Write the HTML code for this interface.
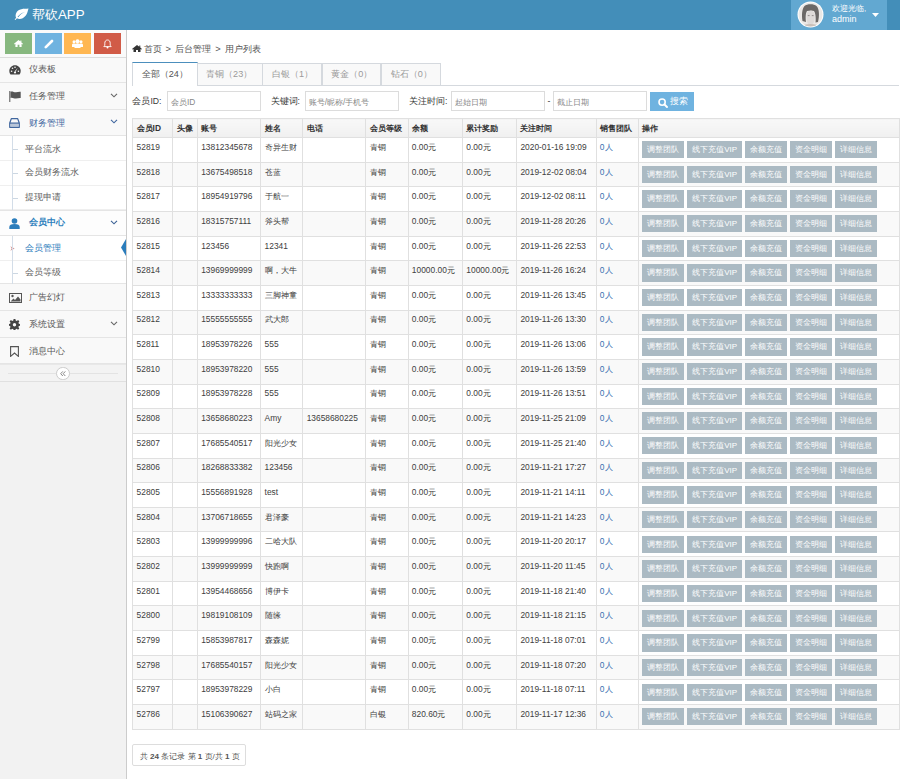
<!DOCTYPE html>
<html><head><meta charset="utf-8">
<style>
*{box-sizing:border-box;margin:0;padding:0}
html,body{width:900px;height:779px;overflow:hidden;background:#fff}
body{font-family:"Liberation Sans",sans-serif;font-size:8.67px;color:#404040;position:relative}
.abs{position:absolute}
#hdr{left:0;top:0;width:900px;height:30px;background:#438EB9}
#brand{left:32px;top:7px;color:#fff;font-size:13.3px;line-height:16px;white-space:nowrap}
#user{left:791px;top:0;width:96px;height:29.5px;background:#62A8D1}
#avatar{left:797px;top:1px;width:27px;height:27px;border-radius:50%;border:1.5px solid #fff;background:radial-gradient(circle at 50% 55%,#d8d4cc 0,#bfb9b0 35%,#8a847c 60%,#cfcac4 100%)}
#uinfo{left:832px;top:3px;color:#fff;font-size:8.67px;line-height:11px;white-space:nowrap}
#side{left:0;top:30px;width:127px;height:749px;background:#f2f2f2;border-right:1px solid #ccc}
#short{left:0;top:30px;width:126px;height:28px;background:#fafafa;border-bottom:1px solid #ddd}
.sb{position:absolute;top:3px;width:27px;height:21px}
.nav{left:0;width:126px;background:#f9f9f9;border-bottom:1px solid #e5e5e5;color:#585858;font-size:8.67px}
.nav .t{position:absolute;left:29px;top:0;white-space:nowrap}
.nav svg.i{position:absolute}
.nav .ch{position:absolute;left:110px;width:8px;height:5px}
.nav.open{color:#2B7DBC}
.sub{left:0;width:126px;background:#fff;border-bottom:1px solid #efefef;color:#616161;font-size:8.67px}
.sub .t{position:absolute;left:25px;white-space:nowrap}
.sub .tick{position:absolute;left:13px;width:5px;height:1px;background:#ccd7e2}
.vline{position:absolute;left:12px;width:1px;background:#d3dde8;z-index:3}
#main{left:127px;top:30px;width:773px;height:749px;background:#fff}
#bc{left:132px;top:43px;color:#555;font-size:9.3px;white-space:nowrap;line-height:12px;word-spacing:1.5px}
.tab{position:absolute;top:63px;height:22.3px;border:1px solid #d5d9de;border-bottom:none;background:#f9f9f9;color:#999;font-size:9.1px;white-space:nowrap;line-height:21.2px;padding-left:8.5px}
.tab.act{top:61.6px;height:24px;line-height:23.5px;border-top:1.7px solid #4C8FBD;background:#fff;color:#555;z-index:2}
#tabline{left:132px;top:85px;width:767px;height:1px;background:#d5d9de}
.lbl{position:absolute;top:95px;color:#393939;font-size:8.67px;white-space:nowrap;line-height:12px}
.inp{position:absolute;top:91.3px;height:19.7px;border:1px solid #dcdcdc;background:#fff;color:#888;font-size:8.4px;line-height:17.5px;padding-left:3px;padding-top:1.5px;white-space:nowrap}
#sbtn{left:650px;top:92px;width:43.7px;height:19px;background:#6FB3E0;color:#fff;font-size:8.67px;line-height:19px;white-space:nowrap}
table{position:absolute;left:132.3px;top:118.3px;width:767.2px;border-collapse:collapse;table-layout:fixed}
td,th{border:1px solid #e0e0e0;text-align:left;vertical-align:top;padding:2.9px 0 0 3.3px;white-space:nowrap;overflow:visible;font-size:8.4px;line-height:13px}
th{height:18.7px;padding-top:2.5px;background:linear-gradient(#f8f8f8,#f0f0f0);color:#333;font-weight:bold}
td{height:24.67px}
tr.e td{background:#f9f9f9}
td.lk{color:#3b6fb0}
td.op{padding:3.1px 0 0 3.3px;line-height:0;font-size:0}
td.op b{display:inline-block;height:17.3px;background:#ABBAC3;color:#fff;font-weight:normal;font-size:8px;line-height:17.3px;margin-right:2.67px;text-align:center;vertical-align:top}
td.op b:nth-child(1){width:42.6px}
td.op b:nth-child(2){width:55px}
td.op b:nth-child(3){width:42.3px}
td.op b:nth-child(4){width:42.3px}
td.op b:nth-child(5){width:42.3px}
#pg{left:132.3px;top:744px;width:113.4px;height:22px;border:1px solid #ddd;border-radius:2px;color:#555;font-size:8.1px;line-height:23px;padding-left:6.5px;white-space:nowrap}
</style></head><body>
<div id="hdr" class="abs"></div>
<svg class="abs" style="left:14px;top:8px" width="15" height="12" viewBox="0 0 15 12"><path d="M14.5 0.5C10 1 4 0 2 5.5C1.2 7.8 1.8 9.3 2.2 9.8L0.6 11.4L1.4 11.9L3 10.3C5 11.6 9 11.3 11.8 7.5C13.3 5.5 13.8 3 14.5 0.5Z M3.6 8.8C5.8 6.2 8.5 4.6 11.2 3.8C8.3 5 6 6.8 4.3 9.3Z" fill="#fff" fill-rule="evenodd"/></svg>
<div id="brand" class="abs">帮砍APP</div>
<div id="user" class="abs"></div>
<svg class="abs" style="left:796.5px;top:1px" width="27" height="27" viewBox="0 0 27 27"><defs><clipPath id="cc"><circle cx="13.5" cy="13.5" r="12"/></clipPath></defs><circle cx="13.5" cy="13.5" r="13" fill="#fff"/><g clip-path="url(#cc)"><rect width="27" height="27" fill="#eae8e6"/><path d="M5.5 20C4.5 14 5 8 7.5 5C10 2.5 17 2.5 19.5 5C22.5 8 22.5 15 21 21L18.5 21.5C19 17 18.5 12 17 10C15 9 12 9.5 10 10C8.5 12 8.5 17 9 21Z" fill="#6b6866"/><path d="M9.5 13C10 10.5 12 9.8 13.8 9.8C16 9.8 17.5 11 17.8 13.5C18 17 17.5 21 15.5 23.5C14 24.5 12.5 24.5 11.2 23.3C9.8 21 9.2 17 9.5 13Z" fill="#dedad8"/><path d="M10.8 14.6H12.6M14.8 14.6H16.6" stroke="#8a8582" stroke-width="0.9"/><path d="M3 27C5 24 8 23 13.5 23S22 24 24 27Z" fill="#c9bfb8"/></g></svg>
<div id="uinfo" class="abs"><span style="font-size:8px">欢迎光临,</span><br><span style="font-size:9px">admin</span></div>
<svg class="abs" style="left:872px;top:13px" width="7" height="4" viewBox="0 0 7 4"><path d="M0 0H7L3.5 4Z" fill="#fff"/></svg>

<div id="side" class="abs"></div>
<div id="short" class="abs">
<div class="sb" style="left:5px;background:#87B87F"><svg style="position:absolute;left:9px;top:7px" width="9" height="7" viewBox="0 0 9 7"><path d="M4.5 0L0 3.8L0.6 4.4L1.4 3.7V7H3.6V4.8H5.4V7H7.6V3.7L8.4 4.4L9 3.8L7.4 2.4V0.5H6.4V1.6Z" fill="#fff"/></svg></div>
<div class="sb" style="left:35px;background:#6FB3E0"><svg style="position:absolute;left:9px;top:5.5px" width="10" height="10" viewBox="0 0 10 10"><path d="M1.8 8.2L8 2" stroke="#fff" stroke-width="2.6" stroke-linecap="round"/><path d="M1 9.2L1.6 7.4L2.6 8.4Z" fill="#fff"/></svg></div>
<div class="sb" style="left:64px;background:#FFB752"><svg style="position:absolute;left:8px;top:6px" width="11" height="9" viewBox="0 0 11 9"><circle cx="5.5" cy="2.2" r="2" fill="#fff"/><circle cx="2" cy="2.8" r="1.5" fill="#fff"/><circle cx="9" cy="2.8" r="1.5" fill="#fff"/><path d="M2.5 9V6.5C2.5 5 4 4.3 5.5 4.3S8.5 5 8.5 6.5V9Z" fill="#fff"/><path d="M0 8V6C0 5 0.8 4.6 2 4.6S3.5 5 3.5 6V8Z M7.5 8V6C7.5 5 8 4.6 9 4.6S11 5 11 6V8Z" fill="#fff"/></svg></div>
<div class="sb" style="left:94px;background:#D15B47"><svg style="position:absolute;left:9px;top:5.5px" width="9" height="10" viewBox="0 0 9 10"><path d="M4.5 1C2.6 1 1.8 2.5 1.8 4.2V6.3L0.8 7.6H8.2L7.2 6.3V4.2C7.2 2.5 6.4 1 4.5 1Z" fill="none" stroke="#fff" stroke-width="0.9"/><circle cx="4.5" cy="8.6" r="1" fill="#fff"/></svg></div>
</div>

<!-- nav -->
<div class="nav abs" style="top:58px;height:25px"><svg class="i" style="left:9px;top:7px" width="12" height="10" viewBox="0 0 12 10"><path d="M6 0.3C2.8 0.3 0.3 2.8 0.3 6C0.3 7.3 0.7 8.6 1.5 9.6H10.5C11.3 8.6 11.7 7.3 11.7 6C11.7 2.8 9.2 0.3 6 0.3Z" fill="#444"/><circle cx="2.6" cy="6.3" r="0.8" fill="#f9f9f9"/><circle cx="3.5" cy="3.3" r="0.8" fill="#f9f9f9"/><circle cx="6" cy="2.2" r="0.8" fill="#f9f9f9"/><circle cx="9.4" cy="6.3" r="0.8" fill="#f9f9f9"/><path d="M8.6 2.8L6.6 6.8L5.6 6.4Z" fill="#f9f9f9"/><circle cx="6" cy="7.5" r="1.1" fill="#f9f9f9"/></svg><span class="t" style="top:6px">仪表板</span></div>
<div class="nav abs" style="top:83px;height:26.5px"><svg class="i" style="left:9px;top:8px" width="12" height="11" viewBox="0 0 12 11"><rect x="0.3" y="0" width="1" height="11" fill="#555"/><path d="M1.5 0.8C3.5 0 5 1.5 7 1.3C8.5 1.2 10 0.5 11.7 0.8V7C10 6.8 8.5 7.5 7 7.6C5 7.7 3.5 6.3 1.5 7Z" fill="#555"/></svg><span class="t" style="top:8px">任务管理</span><svg class="ch" style="top:9.8px" viewBox="0 0 8 5"><path d="M1 0.8L4 3.8L7 0.8" fill="none" stroke="#666" stroke-width="1.15"/></svg></div>
<div class="nav abs" style="top:109.5px;height:26.5px;color:#41679f"><svg class="i" style="left:9px;top:8.8px" width="11" height="10" viewBox="0 0 11 10"><path d="M2.3 0.7H8.7L10.3 5V9.3H0.7V5Z M0.7 5.2H10.3" fill="none" stroke="#41679f" stroke-width="1.2" stroke-linejoin="round"/><rect x="1.6" y="6" width="7.8" height="2.6" fill="#41679f" opacity="0.35"/></svg><span class="t" style="top:8px">财务管理</span><svg class="ch" style="top:9.8px" viewBox="0 0 8 5"><path d="M1 0.8L4 3.8L7 0.8" fill="none" stroke="#41679f" stroke-width="1.15"/></svg></div>
<div class="vline" style="top:136px;height:74px"></div>
<div class="sub abs" style="top:136px;height:25px"><span class="tick" style="top:13px"></span><span class="t" style="top:7.5px">平台流水</span></div>
<div class="sub abs" style="top:161px;height:24.5px"><span class="tick" style="top:12px"></span><span class="t" style="top:6px">会员财务流水</span></div>
<div class="sub abs" style="top:185.5px;height:24px"><span class="tick" style="top:12px"></span><span class="t" style="top:6px">提现申请</span></div>
<div class="nav open abs" style="top:209.5px;height:26.5px;border-top:1px solid #e5e5e5;background:#fdfdfd"><svg class="i" style="left:9px;top:7px" width="11" height="11" viewBox="0 0 11 11"><circle cx="5.5" cy="3" r="2.8" fill="#2B7DBC"/><path d="M0.3 11V9C0.3 7 2 6 5.5 6S10.7 7 10.7 9V11Z" fill="#2B7DBC"/></svg><span class="t" style="top:6.5px;font-weight:bold">会员中心</span><svg class="ch" style="top:9.8px" viewBox="0 0 8 5"><path d="M1 0.8L4 3.8L7 0.8" fill="none" stroke="#3d6396" stroke-width="1.15"/></svg></div>
<div class="vline" style="top:236px;height:48px"></div>
<div class="sub abs" style="top:236px;height:24.5px;color:#2B7DBC"><svg style="position:absolute;left:10px;top:9.6px" width="5" height="5" viewBox="0 0 5 5"><path d="M0.3 0.2L4.7 2.5L0.3 4.8L1.6 2.5Z" fill="#d49a9a"/></svg><span class="t" style="top:7.3px">会员管理</span><svg style="position:absolute;left:121px;top:2.8px" width="5" height="17" viewBox="0 0 5 17"><path d="M5 0V17L0 8.5Z" fill="#2B7DBC"/></svg></div>
<div class="sub abs" style="top:260.5px;height:23.5px;border-bottom:1px solid #e5e5e5"><span class="tick" style="top:12px"></span><span class="t" style="top:6px">会员等级</span></div>
<div class="nav abs" style="top:284px;height:27px"><svg class="i" style="left:8.5px;top:8.5px" width="13" height="10" viewBox="0 0 13 10"><rect x="0.5" y="0.5" width="12" height="9" fill="none" stroke="#555" stroke-width="1"/><circle cx="3.5" cy="3" r="1.2" fill="#555"/><path d="M1.5 8.5L4.5 5.5L6 7L9 3.5L11.5 6.5V8.5Z" fill="#555"/></svg><span class="t" style="top:8px">广告幻灯</span></div>
<div class="nav abs" style="top:311px;height:26.5px"><svg class="i" style="left:9px;top:8px" width="11" height="11" viewBox="0 0 11 11"><path d="M4.6 0H6.4L6.7 1.6L7.8 2.1L9.1 1.1L10.4 2.4L9.4 3.7L9.9 4.8L11 5V6.8L9.9 7L9.4 8.1L10.3 9.4L9 10.7L7.7 9.8L6.6 10.3L6.4 11H4.6L4.3 10.3L3.2 9.8L1.9 10.7L0.6 9.4L1.5 8.1L1.1 7L0 6.8V5L1.1 4.8L1.6 3.7L0.6 2.4L1.9 1.1L3.2 2.1L4.3 1.6Z" fill="#444"/><circle cx="5.5" cy="5.7" r="1.7" fill="#f9f9f9"/></svg><span class="t" style="top:8px">系统设置</span><svg class="ch" style="top:9.8px" viewBox="0 0 8 5"><path d="M1 0.8L4 3.8L7 0.8" fill="none" stroke="#666" stroke-width="1.15"/></svg></div>
<div class="nav abs" style="top:337.5px;height:26.5px"><svg class="i" style="left:10px;top:8px" width="9" height="11" viewBox="0 0 9 11"><path d="M0.6 0.6H8.4V10.4L4.5 7L0.6 10.4Z" fill="none" stroke="#555" stroke-width="1.1"/></svg><span class="t" style="top:8px">消息中心</span></div>
<div class="abs" style="left:0;top:364.3px;width:126px;height:18px;background:#f3f3f3;border-top:1px solid #e8e8e8;border-bottom:1px solid #e0e0e0"></div>
<div class="abs" style="left:8px;top:373.2px;width:110px;height:1px;background:#e3e3e3"></div>
<div class="abs" style="left:56.3px;top:366.9px;width:13.6px;height:13.6px;border-radius:50%;border:1.2px solid #ccc;background:#fff;"></div>
<svg class="abs" style="left:60px;top:371px" width="6" height="5.5" viewBox="0 0 6 5.5"><path d="M2.8 0.4L0.7 2.7L2.8 5 M5.3 0.4L3.2 2.7L5.3 5" fill="none" stroke="#888" stroke-width="1"/></svg>

<div id="main" class="abs"></div>
<div id="bc" class="abs"><svg style="position:relative;top:0px;margin-right:1.5px" width="10" height="7" viewBox="0 0 10 7"><path d="M5 0L0 4L0.6 4.6L1.5 3.9V7H4V5H6V7H8.5V3.9L9.4 4.6L10 4L8.3 2.6V0.5H7.3V1.8Z" fill="#333"/></svg>首页 &gt; 后台管理 &gt; 用户列表</div>

<div class="tab act" style="left:132.3px;width:65.5px">全部（24）</div>
<div class="tab" style="left:196.6px;width:66px">青铜（23）</div>
<div class="tab" style="left:262.4px;width:59.6px">白银（1）</div>
<div class="tab" style="left:321.8px;width:59.6px">黄金（0）</div>
<div class="tab" style="left:381.2px;width:60px">钻石（0）</div>
<div id="tabline" class="abs"></div>

<span class="lbl" style="left:132.4px">会员ID:</span>
<div class="inp" style="left:166.9px;width:94.3px">会员ID</div>
<span class="lbl" style="left:270.5px">关键词:</span>
<div class="inp" style="left:304.7px;width:94px">账号/昵称/手机号</div>
<span class="lbl" style="left:409px">关注时间:</span>
<div class="inp" style="left:450.8px;width:94px">起始日期</div>
<span class="lbl" style="left:547.5px">-</span>
<div class="inp" style="left:553px;width:94px">截止日期</div>
<div id="sbtn" class="abs"><svg style="position:absolute;left:8px;top:5.5px" width="10" height="10" viewBox="0 0 10 10"><circle cx="4.1" cy="4.1" r="3.1" fill="none" stroke="#fff" stroke-width="1.6"/><path d="M6.5 6.5L9 9" stroke="#fff" stroke-width="1.9" stroke-linecap="round"/></svg><span style="position:absolute;left:20px;top:0;font-size:9px">搜索</span></div>

<table>
<colgroup><col style="width:40px"><col style="width:24.6px"><col style="width:63.4px"><col style="width:42.1px"><col style="width:63.1px"><col style="width:42.1px"><col style="width:54.5px"><col style="width:54.1px"><col style="width:79.4px"><col style="width:42px"><col style="width:261.9px"></colgroup>
<tr><th>会员ID</th><th>头像</th><th>账号</th><th>姓名</th><th>电话</th><th>会员等级</th><th>余额</th><th>累计奖励</th><th>关注时间</th><th>销售团队</th><th>操作</th></tr>
<tr><td>52819</td><td></td><td>13812345678</td><td>奇异生财</td><td></td><td>青铜</td><td>0.00元</td><td>0.00元</td><td>2020-01-16 19:09</td><td class="lk">0人</td><td class="op"><b>调整团队</b><b>线下充值VIP</b><b>余额充值</b><b>资金明细</b><b>详细信息</b></td></tr>
<tr class="e"><td>52818</td><td></td><td>13675498518</td><td>苍蓝</td><td></td><td>青铜</td><td>0.00元</td><td>0.00元</td><td>2019-12-02 08:04</td><td class="lk">0人</td><td class="op"><b>调整团队</b><b>线下充值VIP</b><b>余额充值</b><b>资金明细</b><b>详细信息</b></td></tr>
<tr><td>52817</td><td></td><td>18954919796</td><td>于航一</td><td></td><td>青铜</td><td>0.00元</td><td>0.00元</td><td>2019-12-02 08:11</td><td class="lk">0人</td><td class="op"><b>调整团队</b><b>线下充值VIP</b><b>余额充值</b><b>资金明细</b><b>详细信息</b></td></tr>
<tr class="e"><td>52816</td><td></td><td>18315757111</td><td>斧头帮</td><td></td><td>青铜</td><td>0.00元</td><td>0.00元</td><td>2019-11-28 20:26</td><td class="lk">0人</td><td class="op"><b>调整团队</b><b>线下充值VIP</b><b>余额充值</b><b>资金明细</b><b>详细信息</b></td></tr>
<tr><td>52815</td><td></td><td>123456</td><td>12341</td><td></td><td>青铜</td><td>0.00元</td><td>0.00元</td><td>2019-11-26 22:53</td><td class="lk">0人</td><td class="op"><b>调整团队</b><b>线下充值VIP</b><b>余额充值</b><b>资金明细</b><b>详细信息</b></td></tr>
<tr class="e"><td>52814</td><td></td><td>13969999999</td><td>啊，大牛</td><td></td><td>青铜</td><td>10000.00元</td><td>10000.00元</td><td>2019-11-26 16:24</td><td class="lk">0人</td><td class="op"><b>调整团队</b><b>线下充值VIP</b><b>余额充值</b><b>资金明细</b><b>详细信息</b></td></tr>
<tr><td>52813</td><td></td><td>13333333333</td><td>三脚神童</td><td></td><td>青铜</td><td>0.00元</td><td>0.00元</td><td>2019-11-26 13:45</td><td class="lk">0人</td><td class="op"><b>调整团队</b><b>线下充值VIP</b><b>余额充值</b><b>资金明细</b><b>详细信息</b></td></tr>
<tr class="e"><td>52812</td><td></td><td>15555555555</td><td>武大郎</td><td></td><td>青铜</td><td>0.00元</td><td>0.00元</td><td>2019-11-26 13:30</td><td class="lk">0人</td><td class="op"><b>调整团队</b><b>线下充值VIP</b><b>余额充值</b><b>资金明细</b><b>详细信息</b></td></tr>
<tr><td>52811</td><td></td><td>18953978226</td><td>555</td><td></td><td>青铜</td><td>0.00元</td><td>0.00元</td><td>2019-11-26 13:06</td><td class="lk">0人</td><td class="op"><b>调整团队</b><b>线下充值VIP</b><b>余额充值</b><b>资金明细</b><b>详细信息</b></td></tr>
<tr class="e"><td>52810</td><td></td><td>18953978220</td><td>555</td><td></td><td>青铜</td><td>0.00元</td><td>0.00元</td><td>2019-11-26 13:59</td><td class="lk">0人</td><td class="op"><b>调整团队</b><b>线下充值VIP</b><b>余额充值</b><b>资金明细</b><b>详细信息</b></td></tr>
<tr><td>52809</td><td></td><td>18953978228</td><td>555</td><td></td><td>青铜</td><td>0.00元</td><td>0.00元</td><td>2019-11-26 13:51</td><td class="lk">0人</td><td class="op"><b>调整团队</b><b>线下充值VIP</b><b>余额充值</b><b>资金明细</b><b>详细信息</b></td></tr>
<tr class="e"><td>52808</td><td></td><td>13658680223</td><td>Amy</td><td>13658680225</td><td>青铜</td><td>0.00元</td><td>0.00元</td><td>2019-11-25 21:09</td><td class="lk">0人</td><td class="op"><b>调整团队</b><b>线下充值VIP</b><b>余额充值</b><b>资金明细</b><b>详细信息</b></td></tr>
<tr><td>52807</td><td></td><td>17685540517</td><td>阳光少女</td><td></td><td>青铜</td><td>0.00元</td><td>0.00元</td><td>2019-11-25 21:40</td><td class="lk">0人</td><td class="op"><b>调整团队</b><b>线下充值VIP</b><b>余额充值</b><b>资金明细</b><b>详细信息</b></td></tr>
<tr class="e"><td>52806</td><td></td><td>18268833382</td><td>123456</td><td></td><td>青铜</td><td>0.00元</td><td>0.00元</td><td>2019-11-21 17:27</td><td class="lk">0人</td><td class="op"><b>调整团队</b><b>线下充值VIP</b><b>余额充值</b><b>资金明细</b><b>详细信息</b></td></tr>
<tr><td>52805</td><td></td><td>15556891928</td><td>test</td><td></td><td>青铜</td><td>0.00元</td><td>0.00元</td><td>2019-11-21 14:11</td><td class="lk">0人</td><td class="op"><b>调整团队</b><b>线下充值VIP</b><b>余额充值</b><b>资金明细</b><b>详细信息</b></td></tr>
<tr class="e"><td>52804</td><td></td><td>13706718655</td><td>君泽豪</td><td></td><td>青铜</td><td>0.00元</td><td>0.00元</td><td>2019-11-21 14:23</td><td class="lk">0人</td><td class="op"><b>调整团队</b><b>线下充值VIP</b><b>余额充值</b><b>资金明细</b><b>详细信息</b></td></tr>
<tr><td>52803</td><td></td><td>13999999996</td><td>二哈大队</td><td></td><td>青铜</td><td>0.00元</td><td>0.00元</td><td>2019-11-20 20:17</td><td class="lk">0人</td><td class="op"><b>调整团队</b><b>线下充值VIP</b><b>余额充值</b><b>资金明细</b><b>详细信息</b></td></tr>
<tr class="e"><td>52802</td><td></td><td>13999999999</td><td>快跑啊</td><td></td><td>青铜</td><td>0.00元</td><td>0.00元</td><td>2019-11-20 11:45</td><td class="lk">0人</td><td class="op"><b>调整团队</b><b>线下充值VIP</b><b>余额充值</b><b>资金明细</b><b>详细信息</b></td></tr>
<tr><td>52801</td><td></td><td>13954468656</td><td>博伊卡</td><td></td><td>青铜</td><td>0.00元</td><td>0.00元</td><td>2019-11-18 21:40</td><td class="lk">0人</td><td class="op"><b>调整团队</b><b>线下充值VIP</b><b>余额充值</b><b>资金明细</b><b>详细信息</b></td></tr>
<tr class="e"><td>52800</td><td></td><td>19819108109</td><td>随缘</td><td></td><td>青铜</td><td>0.00元</td><td>0.00元</td><td>2019-11-18 21:15</td><td class="lk">0人</td><td class="op"><b>调整团队</b><b>线下充值VIP</b><b>余额充值</b><b>资金明细</b><b>详细信息</b></td></tr>
<tr><td>52799</td><td></td><td>15853987817</td><td>森森妮</td><td></td><td>青铜</td><td>0.00元</td><td>0.00元</td><td>2019-11-18 07:01</td><td class="lk">0人</td><td class="op"><b>调整团队</b><b>线下充值VIP</b><b>余额充值</b><b>资金明细</b><b>详细信息</b></td></tr>
<tr class="e"><td>52798</td><td></td><td>17685540157</td><td>阳光少女</td><td></td><td>青铜</td><td>0.00元</td><td>0.00元</td><td>2019-11-18 07:20</td><td class="lk">0人</td><td class="op"><b>调整团队</b><b>线下充值VIP</b><b>余额充值</b><b>资金明细</b><b>详细信息</b></td></tr>
<tr><td>52797</td><td></td><td>18953978229</td><td>小白</td><td></td><td>青铜</td><td>0.00元</td><td>0.00元</td><td>2019-11-18 07:11</td><td class="lk">0人</td><td class="op"><b>调整团队</b><b>线下充值VIP</b><b>余额充值</b><b>资金明细</b><b>详细信息</b></td></tr>
<tr class="e"><td>52786</td><td></td><td>15106390627</td><td>站码之家</td><td></td><td>白银</td><td>820.60元</td><td>0.00元</td><td>2019-11-17 12:36</td><td class="lk">0人</td><td class="op"><b>调整团队</b><b>线下充值VIP</b><b>余额充值</b><b>资金明细</b><b>详细信息</b></td></tr></table>
<div id="pg" class="abs">共 <b>24</b> 条记录 第 <b>1</b> 页/共 <b>1</b> 页</div>
</body></html>
